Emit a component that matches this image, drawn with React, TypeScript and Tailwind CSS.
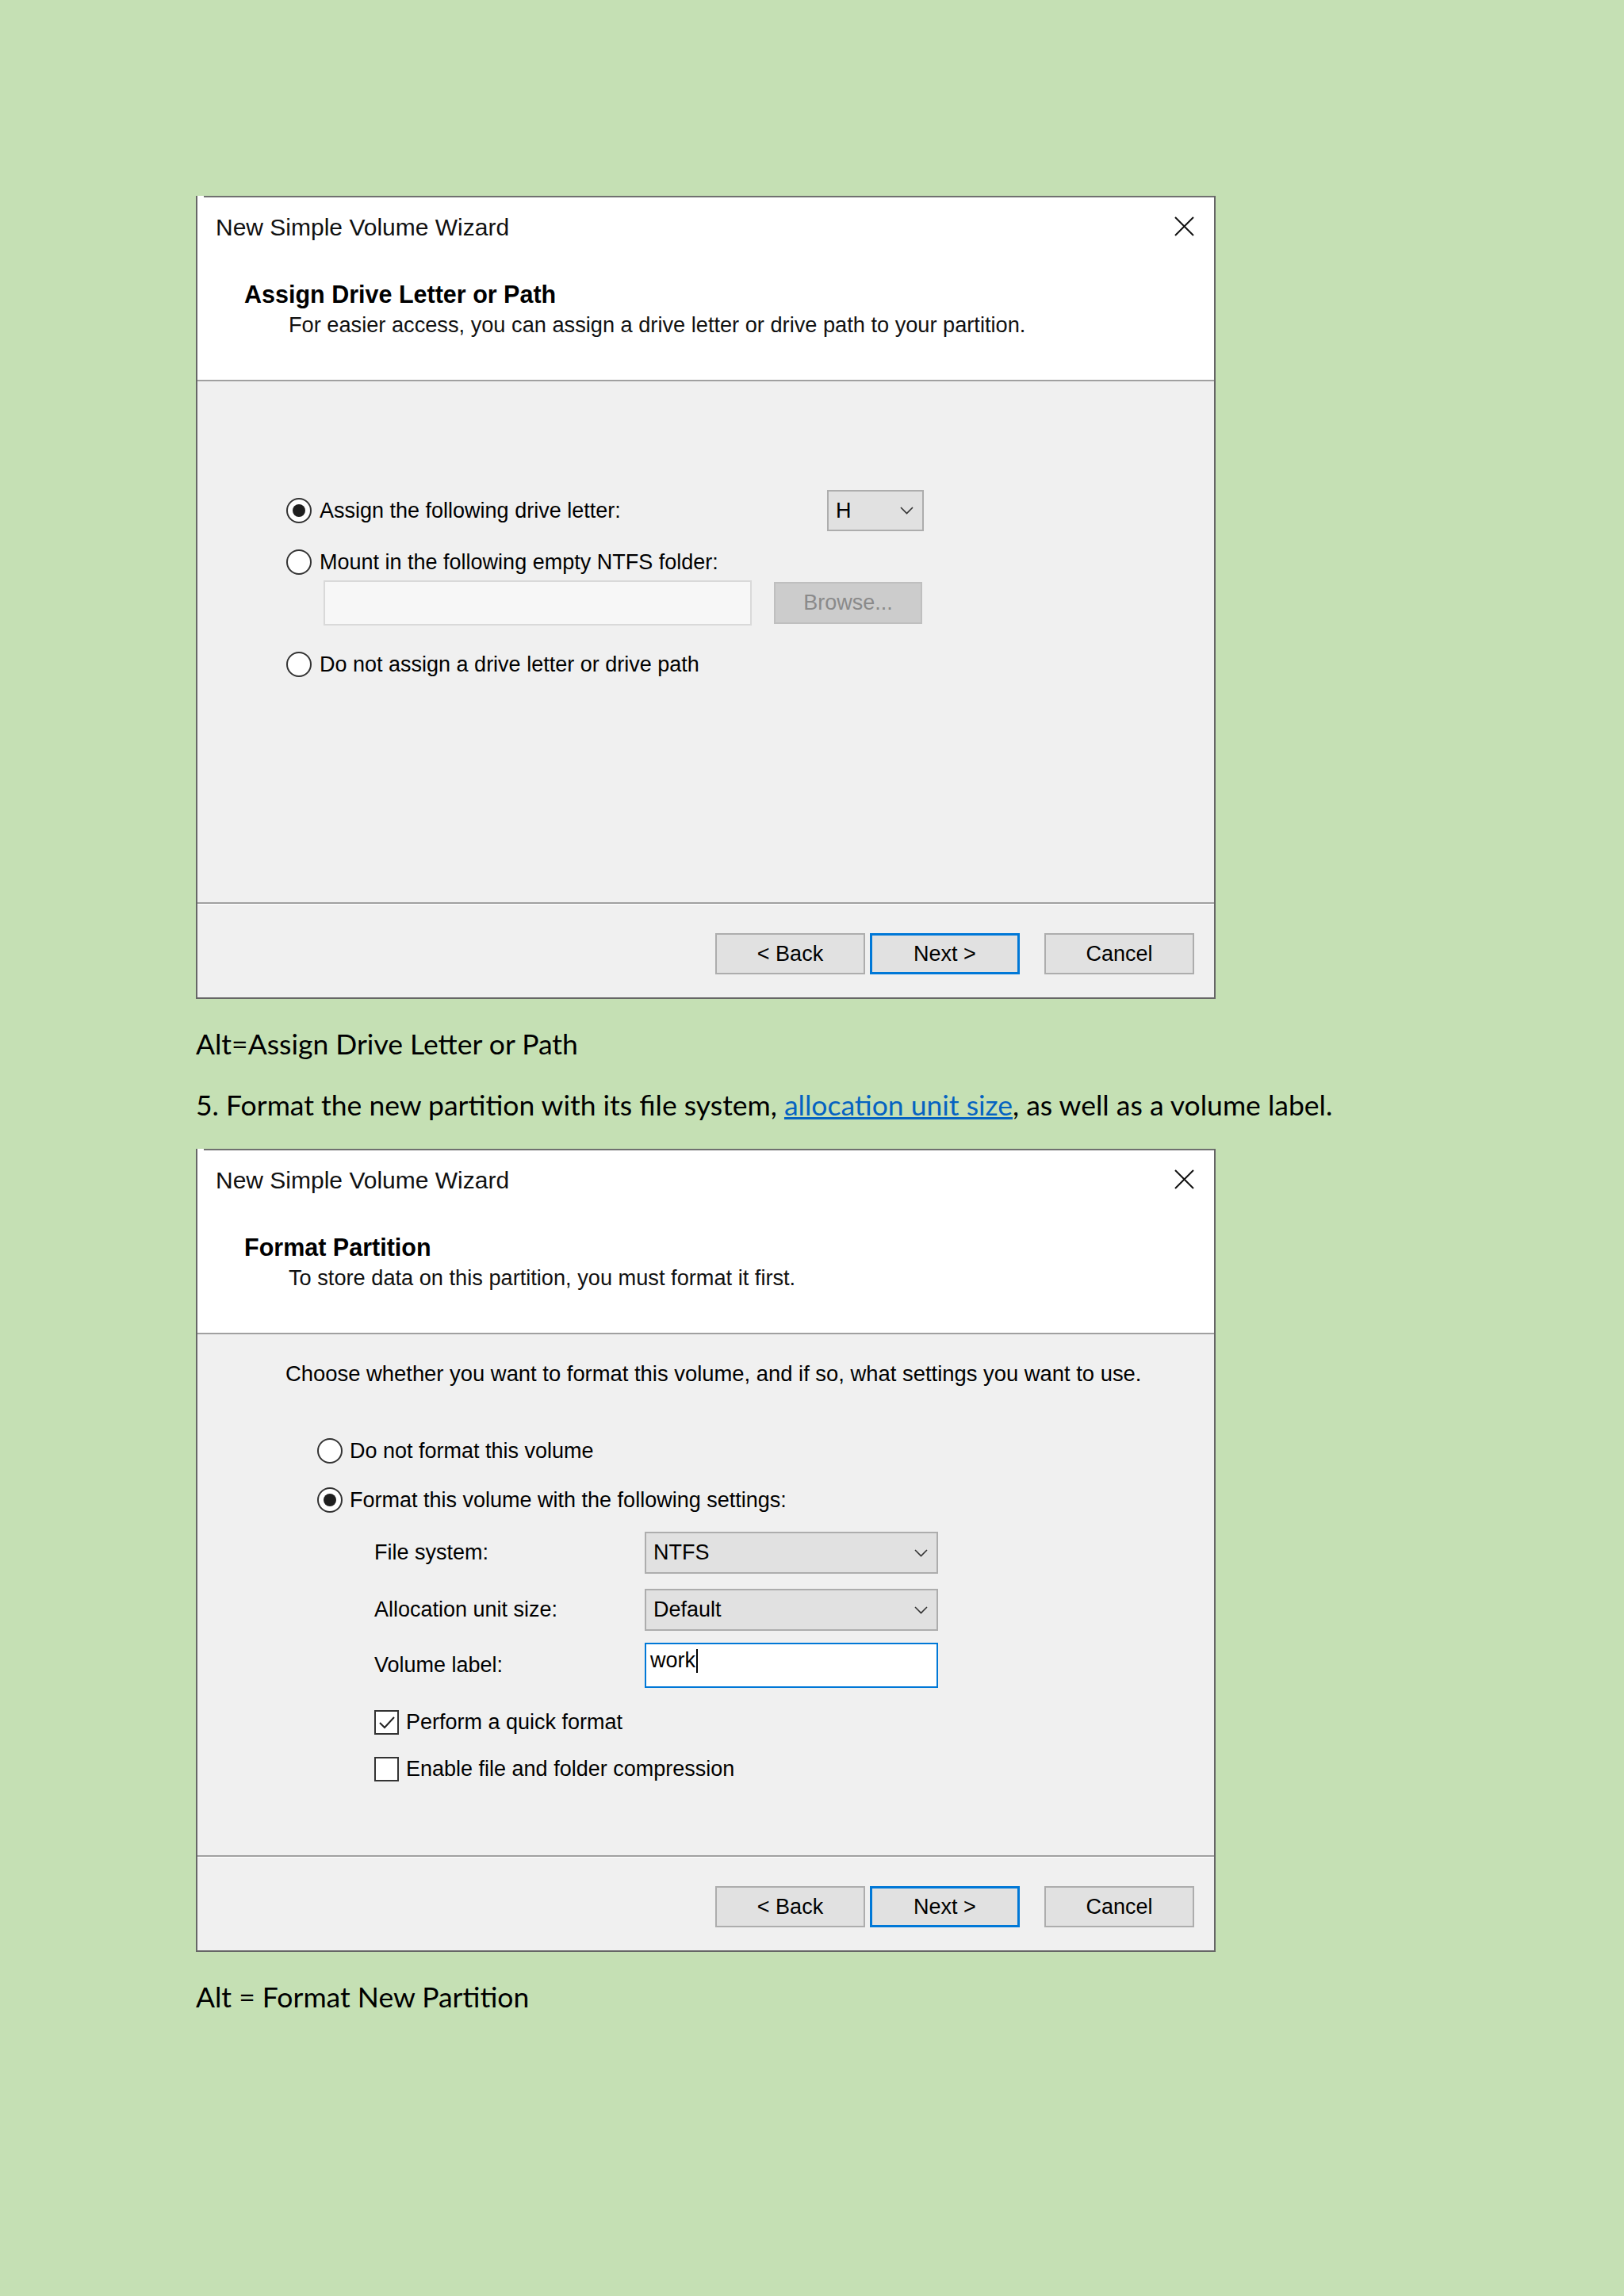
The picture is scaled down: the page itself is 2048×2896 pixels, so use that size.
import React from 'react';

function Radio({ checked }: { checked?: boolean }) {
  return (
    <span className="flex h-[32px] w-[32px] shrink-0 items-center justify-center rounded-full border-2 border-[#333333] bg-white">
      {checked && <span className="h-[16px] w-[16px] rounded-full bg-[#1f1f1f]" />}
    </span>
  );
}

function Check({ checked }: { checked?: boolean }) {
  return (
    <span className="flex h-[31px] w-[31px] shrink-0 items-center justify-center border-2 border-[#333333] bg-white">
      {checked && (
        <svg width="22" height="18" viewBox="0 0 22 18">
          <polyline points="2,9 8,15 20,2" fill="none" stroke="#222" strokeWidth="2" />
        </svg>
      )}
    </span>
  );
}

function Chevron() {
  return (
    <svg width="17" height="10" viewBox="0 0 17 10">
      <polyline points="1,1 8.5,8.5 16,1" fill="none" stroke="#333" strokeWidth="1.6" />
    </svg>
  );
}

function Dropdown({ value, className }: { value: string; className: string }) {
  return (
    <div className={`flex items-center justify-between border-2 border-[#adadad] bg-[#e1e1e1] pl-[9px] pr-[11px] text-[27px] text-black ${className}`}>
      <span>{value}</span>
      <Chevron />
    </div>
  );
}

function Btn({ label, primary, className = '' }: { label: string; primary?: boolean; className?: string }) {
  return (
    <div
      className={`flex h-[52px] w-[189px] items-center justify-center bg-[#e1e1e1] text-[27px] text-black ${
        primary ? 'border-[3px] border-[#0078d7]' : 'border-2 border-[#adadad]'
      } ${className}`}
    >
      {label}
    </div>
  );
}

function Wizard({ heading, sub, children }: { heading: string; sub: string; children: React.ReactNode }) {
  return (
    <div className="flex h-[1013px] w-[1286px] flex-col border-x-2 border-b-2 border-[#666666] bg-white font-['Liberation_Sans',Arial,sans-serif] text-black">
      <div className="h-[232px] bg-white">
        <div className="ml-[8px] h-[2px] bg-[#707070]" />
        <div className="flex items-center justify-between pl-[23px] pr-[25px] pt-[18px]">
          <span className="text-[30px] leading-[40px] text-[#111]">New Simple Volume Wizard</span>
          <svg width="25" height="25" viewBox="0 0 25 25" className="-mt-[3px]">
            <path d="M1 1 L24 24 M24 1 L1 24" stroke="#111" strokeWidth="2" />
          </svg>
        </div>
        <div className="mt-[44px] pl-[59px] text-[30.5px] font-bold leading-[40px]">{heading}</div>
        <div className="pl-[115px] text-[27.2px] leading-[38px] text-[#111]">{sub}</div>
      </div>
      <div className="h-[2px] bg-[#a0a0a0]" />
      <div className="h-[657px] bg-[#f0f0f0] text-[27px]">{children}</div>
      <div className="h-[2px] bg-[#a0a0a0]" />
      <div className="h-[1px] bg-white" />
      <div className="flex flex-1 items-start justify-end bg-[#f0f0f0] pr-[25px] pt-[36px]">
        <Btn label="< Back" />
        <Btn label="Next >" primary className="ml-[6px]" />
        <Btn label="Cancel" className="ml-[31px]" />
      </div>
    </div>
  );
}

export default function App() {
  return (
    <div className="min-h-[2896px] w-full bg-[#c5e0b4] pl-[247px] pt-[247px] font-['Lato',sans-serif] text-[35.5px] text-black">
      <Wizard heading="Assign Drive Letter or Path" sub="For easier access, you can assign a drive letter or drive path to your partition.">
        <div className="flex flex-col pl-[112px] pt-[137px]">
          <div className="flex h-[52px] items-center">
            <div className="flex w-[682px] items-center gap-[10px]">
              <Radio checked />
              <span>Assign the following drive letter:</span>
            </div>
            <Dropdown value="H" className="h-[52px] w-[122px]" />
          </div>
          <div className="mt-[23px] flex h-[32px] items-center gap-[10px]">
            <Radio />
            <span>Mount in the following empty NTFS folder:</span>
          </div>
          <div className="mt-[7px] flex items-center pl-[47px]">
            <div className="h-[57px] w-[540px] border-2 border-[#d9d9d9] bg-[#f7f7f7]" />
            <div className="ml-[28px] flex h-[53px] w-[187px] items-center justify-center border-2 border-[#bfbfbf] bg-[#cccccc] text-[#8a8a8a]">
              Browse...
            </div>
          </div>
          <div className="mt-[33px] flex h-[32px] items-center gap-[10px]">
            <Radio />
            <span>Do not assign a drive letter or drive path</span>
          </div>
        </div>
      </Wizard>

      <p className="mt-[37px] leading-[40px]">Alt=Assign Drive Letter or Path</p>
      <p className="mt-[37px] leading-[40px]">
        5. Format the new partition with its file system,{' '}
        <a className="text-[#0563c1] underline">allocation unit size</a>, as well as a volume label.
      </p>

      <div className="mt-[35px]">
        <Wizard heading="Format Partition" sub="To store data on this partition, you must format it first.">
          <div className="flex flex-col pt-[31px]">
            <div className="pl-[111px] text-[27.4px] leading-[38px]">
              Choose whether you want to format this volume, and if so, what settings you want to use.
            </div>
            <div className="mt-[62px] flex h-[32px] items-center gap-[9px] pl-[151px]">
              <Radio />
              <span>Do not format this volume</span>
            </div>
            <div className="mt-[30px] flex h-[32px] items-center gap-[9px] pl-[151px]">
              <Radio checked />
              <span>Format this volume with the following settings:</span>
            </div>
            <div className="mt-[24px] flex items-center pl-[223px]">
              <span className="w-[341px]">File system:</span>
              <Dropdown value="NTFS" className="h-[53px] w-[370px]" />
            </div>
            <div className="mt-[19px] flex items-center pl-[223px]">
              <span className="w-[341px]">Allocation unit size:</span>
              <Dropdown value="Default" className="h-[53px] w-[370px]" />
            </div>
            <div className="mt-[15px] flex items-center pl-[223px]">
              <span className="w-[341px]">Volume label:</span>
              <div className="flex h-[57px] w-[370px] items-start border-2 border-[#0078d7] bg-white pl-[5px] pt-[3px]">
                <span className="leading-[34px]">work</span>
                <span className="ml-[1px] mt-[3px] h-[30px] w-[2px] bg-black" />
              </div>
            </div>
            <div className="mt-[28px] flex h-[31px] items-center gap-[9px] pl-[223px]">
              <Check checked />
              <span>Perform a quick format</span>
            </div>
            <div className="mt-[28px] flex h-[31px] items-center gap-[9px] pl-[223px]">
              <Check />
              <span>Enable file and folder compression</span>
            </div>
          </div>
        </Wizard>
      </div>

      <p className="mt-[37px] leading-[40px]">Alt = Format New Partition</p>
    </div>
  );
}
